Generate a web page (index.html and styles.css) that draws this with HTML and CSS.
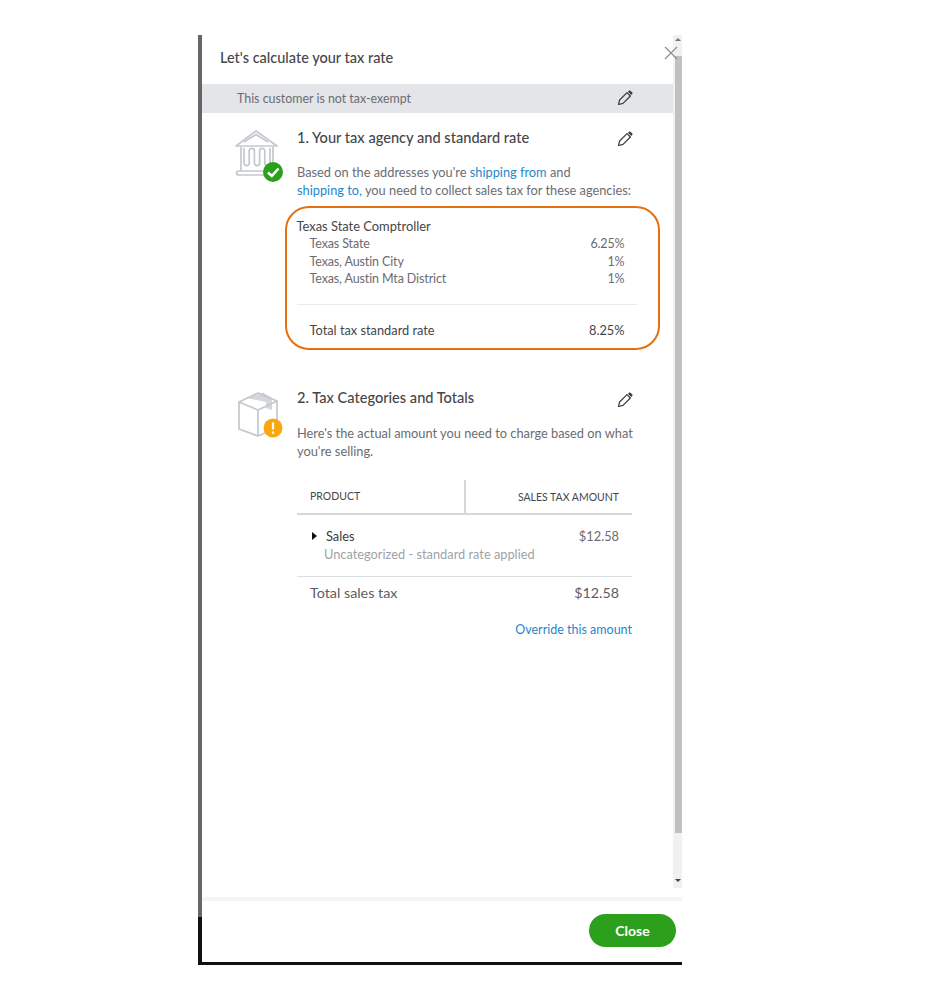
FILE: index.html
```html
<!DOCTYPE html>
<html lang="en">
<head>
  <meta charset="UTF-8">
  <title>Let's calculate your tax rate</title>
  <meta name="viewport" content="width=device-width, initial-scale=1.0">
  <link rel="stylesheet" href="styles.css">
</head>
<body>
  <svg class="defs" width="0" height="0">
    <symbol id="pencil" viewBox="0 0 16 16">
      <path d="M1.5 14.5 L2.6 10 L10 2.6 L13.4 6 L6 13.4 Z" fill="none" stroke="#393a3d" stroke-width="1.2" stroke-linejoin="round"/>
      <path d="M11 1.7 L12.2 .6 Q12.8 .2 13.4 .7 L15.3 2.6 Q15.8 3.2 15.4 3.8 L14.3 5 Z" fill="#393a3d"/>
    </symbol>
  </svg>

  <div class="panel">
    <div class="panel-inner">
      <div class="scroll-area">
        <div class="content">
          <h1 class="title">Let's calculate your tax rate</h1>
          <div class="banner">
            <span>This customer is not tax-exempt</span>
            <svg class="pencil"><use href="#pencil"/></svg>
          </div>

          <section class="step">
            <svg class="step-icon" viewBox="0 0 54 54">
              <g fill="none" stroke="#c4c8ce" stroke-width="1.7" stroke-linejoin="round">
                <path d="M2 17 L22 2 L43 17 Z"/>
                <path d="M10 13 L22 5.5 L34 13"/>
                <path d="M7 18 V42 M39 18 V33"/>
                <path d="M10 19 V34 a2.6 2.6 0 0 0 5.2 0 V22 a2.6 2.6 0 0 1 5.2 0 V34 a2.6 2.6 0 0 0 5.2 0 V22 a2.6 2.6 0 0 1 5.2 0 V34 a2.6 2.6 0 0 0 5.2 0 V19"/>
                <path d="M5 42 H30 M5 42 Q2.5 42 2.5 44 Q2.5 46 5 46 H30"/>
              </g>
              <circle cx="39" cy="43" r="10" fill="#2ca01c"/>
              <path d="M34 43.5 L37.8 47 L44.5 39.5" fill="none" stroke="#fff" stroke-width="2.6"/>
            </svg>
            <div class="step-body">
              <div class="step-head">
                <h2>1. Your tax agency and standard rate</h2>
                <svg class="pencil"><use href="#pencil"/></svg>
              </div>
              <p class="step-text">Based on the addresses you're <a href="#">shipping from</a> and<br><a href="#">shipping to,</a> you need to collect sales tax for these agencies:</p>

              <div class="agency">
                <div class="agency-name">Texas State Comptroller</div>
                <div class="rate"><span>Texas State</span><span>6.25%</span></div>
                <div class="rate"><span>Texas, Austin City</span><span>1%</span></div>
                <div class="rate"><span>Texas, Austin Mta District</span><span>1%</span></div>
                <div class="agency-line"></div>
                <div class="rate rate-total"><span>Total tax standard rate</span><span>8.25%</span></div>
              </div>
            </div>
          </section>

          <section class="step step-two">
            <svg class="step-icon" viewBox="0 0 54 54">
              <path d="M13 9 L29 3.5 L38 9 L38 21 L32 19 L32 13 Z" fill="#c4c8ce" opacity=".75"/>
              <g fill="none" stroke="#c4c8ce" stroke-width="1.7" stroke-linejoin="round">
                <path d="M24 4 L43 12 L43 39 L24 47 L5 40 L5 13 Z"/>
                <path d="M5 13 L24 21 L43 12 M24 21 V47"/>
              </g>
              <circle cx="39" cy="39" r="9.5" fill="#f9a60f"/>
              <path d="M39 33.5 V40.5 M39 42.6 V44.8" stroke="#fff" stroke-width="2.2"/>
            </svg>
            <div class="step-body">
              <div class="step-head">
                <h2>2. Tax Categories and Totals</h2>
                <svg class="pencil"><use href="#pencil"/></svg>
              </div>
              <p class="step-text">Here's the actual amount you need to charge based on what<br>you're selling.</p>

              <div class="tax-table">
                <div class="tax-header">
                  <div class="tax-col-product">PRODUCT</div>
                  <div class="tax-col-amount">SALES TAX AMOUNT</div>
                </div>
                <div class="tax-row">
                  <div class="tax-row-main">
                    <span class="caret"></span>
                    <span class="tax-name">Sales</span>
                    <span class="tax-value">$12.58</span>
                  </div>
                  <div class="tax-sub">Uncategorized - standard rate applied</div>
                </div>
                <div class="tax-total"><span>Total sales tax</span><span>$12.58</span></div>
                <div class="override"><a href="#">Override this amount</a></div>
              </div>
            </div>
          </section>
        </div>

        <div class="scrollbar">
          <span class="arrow-up"></span>
          <div class="thumb"></div>
          <span class="arrow-down"></span>
        </div>
      </div>

      <div class="footer">
        <button type="button" class="close-btn">Close</button>
      </div>

      <svg class="close-x" viewBox="0 0 14 14">
        <path d="M1 1 L13 13 M13 1 L1 13" stroke="#8d9096" stroke-width="1.3"/>
      </svg>
    </div>
  </div>
</body>
</html>
```

FILE: styles.css
```css
html, body { margin: 0; padding: 0; background: #fff; }
body { font-family: Lato, "Open Sans", Arial, sans-serif; color: #393a3d; font-size: 12.8px; }
h1, h2, p { margin: 0; font-weight: normal; }
a { color: #1f87cb; text-decoration: none; }
.defs { position: absolute; }

.panel {
  width: 484px; height: 930px; margin: 35px 0 0 198px; box-sizing: border-box;
  padding: 0 0 3px 4px; background: linear-gradient(#666 0, #666 882px, #111 882px);
}
.panel-inner { position: relative; height: 100%; background: #fff; display: flex; flex-direction: column; }

.scroll-area { display: flex; height: 853px; }
.content { width: 471px; }
.scrollbar { width: 9px; background: #f1f1f1; display: flex; flex-direction: column; align-items: flex-end; }
.thumb { width: 7px; height: 777px; margin-top: 15px; background: #c1c1c1; }
.arrow-up { margin-top: 3px; margin-right: 1px; border: 3px solid transparent; border-bottom-color: #777; border-top: 0; }
.arrow-down { margin-top: auto; margin-bottom: 6px; margin-right: 1px; border: 3px solid transparent; border-top-color: #444; border-bottom: 0; }

.title { height: 49px; line-height: 46px; padding-left: 18px; font-size: 14.5px; font-weight: 500; color: #45464a; }
.banner {
  height: 29px; background: #e3e5e8; display: flex; align-items: center; justify-content: space-between;
  padding: 0 40px 0 35px; color: #6b6c72; font-size: 12.4px;
}
.banner .pencil { margin-top: -2px; }
.pencil { width: 16px; height: 16px; flex: none; }

.step { display: flex; padding: 16px 0 0 32px; }
.step-two { padding-top: 39px; }
.step-icon { width: 54px; height: 54px; flex: none; margin-right: 9px; }
.step-body { width: 340px; }
.step-head { display: flex; justify-content: space-between; align-items: center; height: 18px; padding-right: 4px; }
.step-head .pencil { margin-top: 2px; }
.step-two .step-head .pencil { margin-top: 4px; }
.step-head h2 { font-size: 14.6px; font-weight: 500; line-height: 18px; color: #45464a; }
.step-text { margin-top: 16px; line-height: 18px; color: #6b6c72; white-space: nowrap; }
.step-two .step-text { margin-top: 17px; }

.agency {
  width: 375px; height: 144px; box-sizing: border-box; margin: 7px 0 0 -12px; padding: 9px 21.5px 0 9.5px;
  border: 2.5px solid #e5700f; border-radius: 24px;
}
.agency-name { line-height: 18px; font-size: 12.9px; color: #45464a; }
.rate { display: flex; justify-content: space-between; padding: 0 12px 0 13px; line-height: 17.5px; font-size: 12.5px; letter-spacing: -0.12px; color: #6b6c72; }
.agency-line { height: 1px; margin-top: 16px; background: #e9eaec; }
.rate-total { margin-top: 16px; line-height: 18px; font-size: 12.8px; letter-spacing: 0; color: #45464a; }

.tax-table { width: 335px; margin-top: 20px; }
.tax-header { display: flex; height: 33px; align-items: center; border-bottom: 2px solid #d4d7dc; font-size: 10.5px; color: #45464a; }
.tax-col-product { width: 154px; height: 100%; line-height: 33px; padding-left: 13px; border-right: 2px solid #d4d7dc; }
.tax-col-amount { flex: 1; text-align: right; padding-right: 13px; }

.tax-row { padding: 12px 13px 13px 15px; border-bottom: 1px solid #dcdee1; line-height: 18px; }
.tax-row-main { display: flex; align-items: center; }
.caret { border-left: 5px solid #111; border-top: 4px solid transparent; border-bottom: 4px solid transparent; margin-right: 9px; }
.tax-name { flex: 1; }
.tax-value { color: #6b6c72; }
.tax-sub { margin-left: 12px; color: #a0a2a7; }

.tax-total { display: flex; justify-content: space-between; padding: 7px 13px 0; line-height: 18px; font-size: 14.3px; color: #5c5d62; }
.override { margin-top: 19px; line-height: 18px; font-size: 12.5px; text-align: right; }

.footer { margin-top: 9px; border-top: 4px solid #f4f5f8; padding-top: 13px; display: flex; justify-content: flex-end; padding-right: 6px; }
.close-btn {
  width: 87px; height: 33px; border: 0; border-radius: 17px; background: #2ca01c; color: #fff;
  font-family: inherit; font-size: 14px; font-weight: 700; cursor: pointer;
}

.close-x { position: absolute; top: 11px; left: 462px; width: 14px; height: 14px; }
```
